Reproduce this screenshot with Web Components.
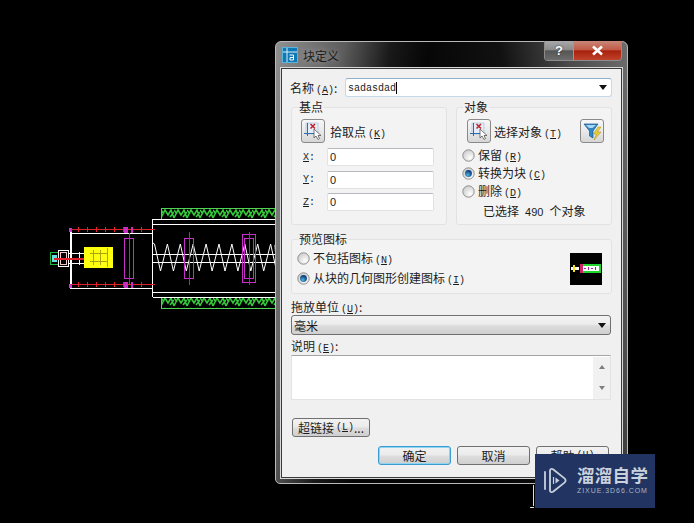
<!DOCTYPE html>
<html lang="zh">
<head>
<meta charset="utf-8">
<title>块定义</title>
<style>
    html, body { margin: 0; height: 100%; background: #000; }
    body {
        position: relative;
        width: 694px;
        height: 523px;
        overflow: hidden;
        font: 12px "Noto Sans CJK SC", sans-serif;
        color: #1c1c1c;
    }
</style>
</head>
<body>
<cad-drawing></cad-drawing>

<block-dialog heading="块定义">
    <div style="display:flex;align-items:center;height:19px;margin-bottom:10px">
        <span style="width:55px;margin-left:-1px">名称<hot-key k="A"></hot-key>:</span>
        <combo-box value="sadasdad" mono style="width:267px"></combo-box>
    </div>

    <div style="display:grid;grid-template-columns:156px 156px;column-gap:9px;height:118px">
        <form-group label="基点">
            <div style="display:flex;align-items:center;gap:5px;padding:4px 0 0 9px">
                <icon-button icon="pick"></icon-button>
                <span>拾取点<hot-key k="K"></hot-key></span>
            </div>
            <div style="display:grid;grid-template-columns:24px 107px;row-gap:4.5px;padding:5px 0 0 11px;align-items:center">
                <axis-label k="X"></axis-label><text-field value="0"></text-field>
                <axis-label k="Y"></axis-label><text-field value="0"></text-field>
                <axis-label k="Z"></axis-label><text-field value="0"></text-field>
            </div>
        </form-group>
        <form-group label="对象">
            <div style="display:flex;align-items:center;padding:4px 0 0 10px">
                <icon-button icon="pick"></icon-button>
                <span style="margin-left:3px">选择对象<hot-key k="T"></hot-key></span>
                <icon-button icon="filter" style="margin-left:auto;margin-right:7px"></icon-button>
            </div>
            <div style="display:flex;flex-direction:column;gap:5px;padding:6px 0 0 5px">
                <radio-option k="R">保留</radio-option>
                <radio-option k="C" checked>转换为块</radio-option>
                <radio-option k="D">删除</radio-option>
            </div>
            <div style="padding:4px 0 0 26px">已选择<span style="font:11px 'Liberation Sans',sans-serif;margin:0 6px">490</span>个对象</div>
        </form-group>
    </div>

    <form-group label="预览图标" style="height:55px;margin-top:14px">
        <div style="display:flex;align-items:flex-start;justify-content:space-between;padding:0 9px 0 5px">
            <div style="display:flex;flex-direction:column;gap:7px;padding-top:4.5px">
                <radio-option k="N">不包括图标</radio-option>
                <radio-option k="I" checked>从块的几何图形创建图标</radio-option>
            </div>
            <icon-preview style="margin-top:6px"></icon-preview>
        </div>
    </form-group>

    <div style="margin-top:5px;height:16px;line-height:16px">拖放单位<hot-key k="U"></hot-key>:</div>
    <combo-box value="毫米" flat style="width:320px"></combo-box>

    <div style="margin-top:3px;height:16px;line-height:16px">说明<hot-key k="E"></hot-key>:</div>
    <memo-box style="margin-top:1px"></memo-box>

    <div style="margin-top:18px">
        <push-button style="width:78px;margin-left:1px">超链接<hot-key k="L"></hot-key>...</push-button>
    </div>
    <div style="display:flex;justify-content:flex-end;gap:6px;margin-top:9px;padding-right:3px">
        <push-button default style="width:73px">确定</push-button>
        <push-button style="width:73px">取消</push-button>
        <push-button style="width:73px">帮助<hot-key k="H"></hot-key></push-button>
    </div>
</block-dialog>

<watermark-logo></watermark-logo>

<script>
class ShadowElement extends HTMLElement {
    constructor() {
        super();
        this.attachShadow({ mode: 'open' });
    }

    connectedCallback() {
        this.shadowRoot.innerHTML = this.render().trim();
    }
}

// the autocad model space behind the dialog
class CadDrawing extends ShadowElement {
    render() {
        let spring = 'M153 243';
        for (let i = 0; i < 10; i++) {
            const x = 154.5 + i * 12.9;
            spring += ` L${x} 244 L${x + 6} 271`;
            if (i === 9) spring += ' L275 245';
        }
        const reds = [];
        for (let x = 78; x < 150; x += 9) {
            reds.push(`M${x} 227V232M${x} 282V287`);
        }
        return `
            <style>
                :host { position: absolute; inset: 0; display: block; }
                svg { display: block; }
            </style>
            <svg width="694" height="523" viewBox="0 0 694 523" fill="none" shape-rendering="crispEdges">
                <defs>
                    <pattern id="hatch" x="161" y="208" width="13" height="11" patternUnits="userSpaceOnUse">
                        <path d="M0 10L4 2L7 7L10 2L13 10M0 2L3 6M9 9L13 4" stroke="#35c93b" stroke-width="1.6" shape-rendering="auto"/>
                    </pattern>
                </defs>
                <rect x="161.5" y="208.5" width="120" height="11" fill="url(#hatch)" stroke="#4fd454"/>
                <rect x="161.5" y="297.5" width="120" height="11" fill="url(#hatch)" stroke="#4fd454"/>
                <path d="M152.5 297V219.5H280M153 224.5H280M153 292.5H280M153 297.5H280" stroke="#fff"/>
                <path d="M70.5 228V289" stroke="#fff" stroke-width="2"/>
                <path d="M69 228H72V232H69ZM69 284H72V288H69Z" fill="#d13ad1"/>
                <path d="M72 233.5H152M72 288.5H152" stroke="#fff"/>
                <path d="M71 229.5H155M71 284.5H155" stroke="#e0202a" stroke-width="1.5"/>
                <path d="${reds.join('')}" stroke="#e0202a"/>
                <path d="M125 227V233M127 227V233M132 227V233M125 282V288M127 282V288M132 282V288" stroke="#c62fc6" stroke-width="1.5"/>
                <path d="${spring}" stroke="#fff" shape-rendering="auto"/>
                <path d="M153 254.5H280M153 262.5H280" stroke="#fff"/>
                <rect x="124.5" y="238.5" width="9" height="40" stroke="#c62fc6"/>
                <rect x="184.5" y="238.5" width="9" height="40" stroke="#c62fc6"/>
                <rect x="242.5" y="234.5" width="13" height="48" stroke="#c62fc6"/>
                <rect x="244.5" y="238.5" width="9" height="40" stroke="#c62fc6"/>
                <path d="M129.5 233V285M189.5 232V285M249.5 232V285" stroke="#e0202a"/>
                <rect x="84" y="247" width="29" height="21" fill="#ffff10"/>
                <path d="M93.5 250V265M100.5 250V265M107.5 248V267M90 253.5H108M90 261.5H108" stroke="#a8a510"/>
                <rect x="50.5" y="252.5" width="8" height="12" stroke="#18b83a"/>
                <rect x="52" y="255" width="5" height="7" fill="#63dfe0"/>
                <rect x="58.5" y="250.5" width="10" height="16" stroke="#fff"/>
                <rect x="60.5" y="252.5" width="6" height="12" stroke="#f2c6c6"/>
                <path d="M68 253.5H84M68 263.5H84M79.5 252V265" stroke="#fff"/>
                <path d="M54 258.5H84" stroke="#e0202a" stroke-width="2"/>
                <path d="M533.5 485V506M530 507.5H534" stroke="#ddd"/>
            </svg>
        `;
    }
}

// aero window frame, the form itself goes in the slot
class BlockDialog extends ShadowElement {
    render() {
        return `
            <style>
                :host {
                    position: absolute;
                    left: 275px;
                    top: 41px;
                    width: 353px;
                    height: 443px;
                    display: flex;
                    flex-direction: column;
                    box-sizing: border-box;
                    border: 1px solid #b9b9b9;
                    border-radius: 6px 6px 5px 5px;
                    background:
                        linear-gradient(100deg, rgba(190,190,190,.75) 0, rgba(130,130,130,.7) 16%, rgba(30,30,30,.8) 27%, transparent 36%),
                        linear-gradient(260deg, #6d6d6d 0, #4b4b4b 14%, #111 30%, transparent 50%),
                        #050505;
                }
                .bar {
                    height: 26px;
                    flex: none;
                    display: flex;
                    align-items: center;
                    gap: 5px;
                    padding-left: 6px;
                    position: relative;
                    color: #1b1b1b;
                    text-shadow: 0 0 6px rgba(255,255,255,.45);
                }
                .logo { width: 16px; height: 16px; }
                .buttons {
                    position: absolute;
                    top: -1px;
                    right: 5px;
                    display: flex;
                    height: 19px;
                    border: 1px solid #8d8d8d;
                    border-top: 0;
                    border-radius: 0 0 4px 4px;
                    overflow: hidden;
                }
                .help, .close {
                    display: flex;
                    align-items: center;
                    justify-content: center;
                    color: #fff;
                    font: bold 13px "Liberation Sans", sans-serif;
                    text-shadow: 0 0 2px #222;
                }
                .help {
                    width: 28px;
                    background: linear-gradient(#a9a9a9, #8b8b8b 46%, #565656 52%, #6c6c6c);
                }
                .close {
                    width: 47px;
                    border-left: 1px solid #999;
                    background: linear-gradient(#c98778, #c25a46 46%, #a8210d 52%, #c0432b);
                }
                .client {
                    flex: 1;
                    margin: 0 5px 5px;
                    box-sizing: border-box;
                    padding: 9px 9px 0 9px;
                    background: #f0f0f0;
                    border: 1px solid #3a3a3a;
                    box-shadow: 0 0 0 1px #d8d8d8;
                }
            </style>
            <div class="bar">
                <svg class="logo" viewBox="0 0 16 16">
                    <rect width="16" height="16" fill="#0f79b5"/>
                    <rect x=".5" y=".5" width="15" height="15" fill="none" stroke="#58b6de"/>
                    <path d="M1 5H15M5 1V15" stroke="#d9f1fb" fill="none"/>
                    <path d="M7.5 8H11.5V13H8V10.5H11.5" stroke="#fff" fill="none"/>
                </svg>
                <span>${this.getAttribute('heading')}</span>
                <div class="buttons">
                    <div class="help">?</div>
                    <div class="close">
                        <svg width="13" height="11" viewBox="0 0 13 11"><path d="M2 1.5L11 9.5M11 1.5L2 9.5" stroke="#fff" stroke-width="2.6"/></svg>
                    </div>
                </div>
            </div>
            <div class="client"><slot></slot></div>
        `;
    }
}

// (A) with the access key underlined, in the narrow latin face of the dialog font
class HotKey extends ShadowElement {
    render() {
        return `
            <style>
                :host { display: inline; margin-left: 2px; font: 10px "Liberation Mono", monospace; }
                u { text-underline-offset: 1px; }
            </style>(<u>${this.getAttribute('k')}</u>)`;
    }
}

class AxisLabel extends ShadowElement {
    render() {
        return `
            <style>
                :host { display: block; font: 10px "Liberation Mono", monospace; }
                u { text-underline-offset: 1px; }
            </style><u>${this.getAttribute('k')}</u>:`;
    }
}

class FormGroup extends ShadowElement {
    render() {
        return `
            <style>
                :host {
                    display: block;
                    box-sizing: border-box;
                    border: 1px solid #e2e2e2;
                    border-radius: 3px;
                    background: #f3f3f3;
                }
                .label {
                    display: block;
                    width: fit-content;
                    height: 16px;
                    line-height: 16px;
                    margin: -9px 0 0 6px;
                    padding: 0 1px;
                    background: linear-gradient(#f0f0f0 55%, #f3f3f3 55%);
                }
            </style>
            <span class="label">${this.getAttribute('label')}</span>
            <slot></slot>
        `;
    }
}

class RadioOption extends ShadowElement {
    render() {
        const checked = this.hasAttribute('checked');
        return `
            <style>
                :host { display: flex; align-items: center; gap: 3px; height: 13px; line-height: 13px; white-space: nowrap; }
                svg { flex: none; }
            </style>
            <svg width="13" height="13" viewBox="0 0 13 13">
                <defs>
                    <radialGradient id="off" cx=".65" cy=".7" r=".7"><stop offset="0" stop-color="#fff"/><stop offset="1" stop-color="#cfcfcf"/></radialGradient>
                    <radialGradient id="on" cx=".4" cy=".7" r=".6"><stop offset="0" stop-color="#4fb3e6"/><stop offset="1" stop-color="#0d3f78"/></radialGradient>
                </defs>
                <circle cx="6.5" cy="6.5" r="5.7" fill="url(#off)" stroke="#8f8f8f"/>
                ${checked ? '<circle cx="6.5" cy="6.5" r="3.4" fill="url(#on)"/>' : ''}
            </svg>
            <span><slot></slot><hot-key k="${this.getAttribute('k')}"></hot-key></span>
        `;
    }
}

class TextField extends ShadowElement {
    render() {
        return `
            <style>
                :host {
                    display: block;
                    box-sizing: border-box;
                    height: 18px;
                    padding-left: 2px;
                    background: #fff;
                    border: 1px solid #e0e3e6;
                    border-top-color: #b5b9bd;
                    border-radius: 2px;
                    font: 11px/16px "Liberation Sans", sans-serif;
                }
            </style>${this.getAttribute('value')}
        `;
    }
}

class ComboBox extends ShadowElement {
    render() {
        const flat = this.hasAttribute('flat');
        const value = this.getAttribute('value');
        return `
            <style>
                :host {
                    display: flex;
                    align-items: center;
                    justify-content: space-between;
                    box-sizing: border-box;
                    height: ${flat ? 20 : 19}px;
                    padding: 0 4px 0 2px;
                    border: 1px solid ${flat ? '#707070' : '#c5d9ea'};
                    border-top-color: ${flat ? '#707070' : '#8fb0cc'};
                    border-radius: 3px;
                    background: ${flat ? 'linear-gradient(#f3f3f3, #ececec 45%, #dcdcdc 55%, #cfcfcf)' : '#fff'};
                }
                .mono { font: 10px "Liberation Mono", monospace; }
                .caret { display: inline-block; width: 1px; height: 12px; background: #000; vertical-align: -3px; }
                i { width: 0; height: 0; border: 4px solid transparent; border-top: 5px solid #111; border-bottom: 0; }
            </style>
            <span class="${this.hasAttribute('mono') ? 'mono' : ''}">${value}${flat ? '' : '<span class="caret"></span>'}</span>
            <i></i>
        `;
    }
}

class IconButton extends ShadowElement {
    render() {
        const pick = `
            <rect x="2" y="1" width="12" height="11" fill="#e4edf8" stroke="#9fb9d6" stroke-width=".6"/>
            <path d="M0 11.5H12M3.5 1V14" stroke="#2c6cb0" fill="none"/>
            <path d="M6.5 2L11 6.5M11 2L6.5 6.5" stroke="#c2202a" stroke-width="1.5" fill="none"/>
            <path d="M10 7L10 16L12 14L14 17.5L15.5 16.5L14 13.5L17 13.5Z" fill="#fff" stroke="#555" stroke-width=".8"/>`;
        const filter = `
            <path d="M1 2H15L10 9V16L6.5 14V9Z" fill="#2f86c5" stroke="#1b5a8f" stroke-width=".7"/>
            <path d="M3 3H13L9.5 6H6Z" fill="#a9d8f2"/>
            <path d="M15 5L10.5 12H13.5L11 18L18 10H14.5L18 5Z" fill="#e8cf3a" stroke="#a98a16" stroke-width=".5"/>`;
        return `
            <style>
                :host {
                    display: flex;
                    align-items: center;
                    justify-content: center;
                    width: 24px;
                    height: 24px;
                    flex: none;
                    box-sizing: border-box;
                    border: 1px solid #8a8a8a;
                    border-radius: 3px;
                    background: linear-gradient(#f7f7f7, #e9e9e9 50%, #d6d6d6);
                }
            </style>
            <svg width="18" height="18" viewBox="0 0 18 18">${this.getAttribute('icon') === 'filter' ? filter : pick}</svg>
        `;
    }
}

class IconPreview extends ShadowElement {
    render() {
        return `
            <style>:host { display: block; width: 32px; height: 32px; background: #000; }</style>
            <svg width="32" height="32" viewBox="0 0 32 32" shape-rendering="crispEdges">
                <rect x="1" y="14" width="8" height="3" fill="#fff"/>
                <rect x="3" y="12" width="2" height="7" fill="#f4e21c"/>
                <rect x="10" y="11" width="3" height="9" fill="#d02468"/>
                <rect x="13" y="11" width="18" height="9" fill="#1fd62e"/>
                <rect x="13" y="13" width="16" height="5" fill="#fff"/>
                <path d="M14 15h2M18 14v3M21 15h2M25 14v3" stroke="#a020b0"/>
            </svg>
        `;
    }
}

class MemoBox extends ShadowElement {
    render() {
        return `
            <style>
                :host {
                    display: flex;
                    justify-content: flex-end;
                    box-sizing: border-box;
                    height: 45px;
                    width: 320px;
                    background: #fff;
                    border: 1px solid #e3e3e3;
                    border-top-color: #a5a5a5;
                }
                .bar {
                    width: 17px;
                    margin-top: 1px;
                    background: #f1f1f1;
                    display: flex;
                    flex-direction: column;
                    justify-content: space-between;
                    align-items: center;
                    padding: 8px 0 9px;
                    box-sizing: border-box;
                }
                i { width: 0; height: 0; border: 3px solid transparent; }
                .up { border-top: 0; border-bottom: 4px solid #7e7e7e; }
                .down { border-bottom: 0; border-top: 4px solid #7e7e7e; }
            </style>
            <div class="bar"><i class="up"></i><i class="down"></i></div>
        `;
    }
}

class PushButton extends ShadowElement {
    render() {
        const isDefault = this.hasAttribute('default');
        return `
            <style>
                :host {
                    display: flex;
                    align-items: center;
                    justify-content: center;
                    box-sizing: border-box;
                    height: 19px;
                    white-space: nowrap;
                    border: 1px solid ${isDefault ? '#3a9bd0' : '#707070'};
                    border-radius: 3px;
                    background: linear-gradient(#f2f2f2, #ebebeb 45%, #dddddd 55%, #cfcfcf);
                    ${isDefault ? 'box-shadow: inset 0 0 0 1px #8fd4f2;' : ''}
                }
            </style>
            <slot></slot>
        `;
    }
}

class WatermarkLogo extends ShadowElement {
    render() {
        return `
            <style>
                :host {
                    position: absolute;
                    left: 535px;
                    top: 454px;
                    width: 120px;
                    height: 54px;
                    display: flex;
                    align-items: center;
                    box-sizing: border-box;
                    padding: 0 0 2px 8px;
                    gap: 10px;
                    background: #223461;
                    color: #c9d1dd;
                }
                .name { font: bold 17.5px/19px "Noto Sans CJK SC", sans-serif; white-space: nowrap; letter-spacing: .3px; }
                .site { font: 7px/9px "Liberation Sans", sans-serif; letter-spacing: .95px; margin-top: 2px; white-space: nowrap; color: #aab4c6; }
            </style>
            <svg width="24" height="27" viewBox="0 0 24 27" fill="none" stroke="#c9d1dd" stroke-width="1.8">
                <path d="M2 5V22" stroke-linecap="round"/>
                <path d="M7 3.5C7 2 8.5 1.5 10 2.2L21.5 11.4C23 12.6 23 14.4 21.5 15.6L10 24.8C8.5 25.5 7 25 7 23.5Z" stroke-linejoin="round"/>
                <path d="M10.5 10V17" stroke-width="1.2"/>
                <path d="M12.5 10.5L16.5 13.5L12.5 16.5Z" fill="#c9d1dd" stroke="none"/>
            </svg>
            <div>
                <div class="name">溜溜自学</div>
                <div class="site">ZIXUE.3D66.COM</div>
            </div>
        `;
    }
}

customElements.define('cad-drawing', CadDrawing);
customElements.define('block-dialog', BlockDialog);
customElements.define('hot-key', HotKey);
customElements.define('axis-label', AxisLabel);
customElements.define('form-group', FormGroup);
customElements.define('radio-option', RadioOption);
customElements.define('text-field', TextField);
customElements.define('combo-box', ComboBox);
customElements.define('icon-button', IconButton);
customElements.define('icon-preview', IconPreview);
customElements.define('memo-box', MemoBox);
customElements.define('push-button', PushButton);
customElements.define('watermark-logo', WatermarkLogo);
</script>
</body>
</html>
